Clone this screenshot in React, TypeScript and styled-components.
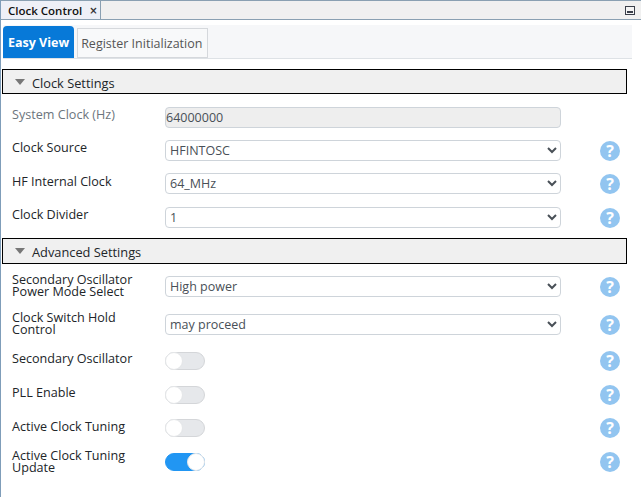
import React from "react";
import styled, { createGlobalStyle } from "styled-components";

const Global = createGlobalStyle`
  html, body { margin: 0; padding: 0; background: #fff; }
  body { font-family: "Open Sans", "Noto Sans", sans-serif; overflow: hidden; }
`;

const Page = styled.div`
  width: 641px;
  height: 497px;
  box-sizing: border-box;
  border-left: 1px solid #7f9db9;
  display: flex;
  flex-direction: column;
`;

const TabStrip = styled.div`
  height: 20px;
  flex: none;
  box-sizing: border-box;
  background: #f0f0f0;
  border-top: 1px solid #8aa0b2;
  border-bottom: 1px solid #8aa0b2;
  display: flex;
  justify-content: space-between;
  align-items: stretch;
`;

const DocTab = styled.div`
  width: 100px;
  box-sizing: border-box;
  background: #eef0f7;
  border-right: 1px solid #8aa0b2;
  padding-left: 7px;
  display: flex;
  align-items: center;
  gap: 7px;
  font-size: 11.5px;
  font-weight: 600;
  color: #111;
  white-space: nowrap;
`;

const CloseMark = styled.span`
  font-family: "DejaVu Sans", sans-serif;
  font-size: 10px;
  font-weight: 700;
  color: #333;
`;

const MinButton = styled.svg`
  width: 11px;
  height: 10px;
  margin: 5px 5px 0 0;
  flex: none;
`;

const ViewTabs = styled.div`
  margin: 5px 9px 0 2px;
  height: 33px;
  flex: none;
  background: #f6f7f9;
  border-bottom: 1px solid #dee2e6;
  display: flex;
  align-items: flex-end;
  gap: 3px;
`;

const ViewTab = styled.div<{ $active?: boolean }>`
  height: ${(p) => (p.$active ? 32 : 30)}px;
  box-sizing: border-box;
  padding: ${(p) => (p.$active ? "0 5px" : "0 5px 0 3px")};
  display: flex;
  align-items: center;
  font-size: 12.5px;
  white-space: nowrap;
  border-radius: ${(p) => (p.$active ? "4px 4px 0 0" : "0")};
  background: ${(p) => (p.$active ? "#0779d8" : "#f8f9fa")};
  color: ${(p) => (p.$active ? "#fff" : "#555")};
  font-weight: ${(p) => (p.$active ? 700 : 400)};
  border: ${(p) => (p.$active ? "none" : "1px solid #d5d8dc")};
`;

const SectionBar = styled.div<{ $mt: number; $h: number }>`
  margin: ${(p) => p.$mt}px 0 0 1px;
  width: 625px;
  height: ${(p) => p.$h}px;
  box-sizing: border-box;
  border: 1px solid #000;
  background: #f0f0f0;
  display: flex;
  align-items: center;
  padding: 2px 0 0 12px;
  gap: 7px;
  font-size: 12.8px;
  color: #212529;
`;

const Caret = styled.span`
  width: 0;
  height: 0;
  border-left: 5px solid transparent;
  border-right: 5px solid transparent;
  border-top: 6px solid #777;
  margin-top: -2px;
`;

const Row = styled.div<{ $mt: number; $h?: number }>`
  margin-top: ${(p) => p.$mt}px;
  height: ${(p) => p.$h ?? 21}px;
  flex: none;
  padding-left: 11px;
  display: flex;
  align-items: flex-start;
`;

const Label = styled.div<{ $muted?: boolean; $top: number }>`
  width: 152px;
  flex: none;
  margin-top: ${(p) => p.$top}px;
  font-size: 12.6px;
  line-height: 12px;
  color: ${(p) => (p.$muted ? "#6c757d" : "#212529")};
`;

const ControlCell = styled.div`
  width: 397px;
  box-sizing: border-box;
  padding-left: 1px;
  flex: none;
  align-self: center;
  display: flex;
  align-items: center;
`;

const TextInput = styled.input`
  width: 100%;
  height: 21px;
  box-sizing: border-box;
  border: 1px solid #ced4da;
  border-radius: 4px;
  background: #eeeeee;
  padding: 0 6px 0 0;
  font: 12.5px "Open Sans", sans-serif;
  color: #495057;
`;

const Select = styled.select`
  width: 100%;
  height: 21px;
  box-sizing: border-box;
  border: 1px solid #ced4da;
  border-radius: 4px;
  background: #fff;
  padding: 0;
  font: 12.5px "Open Sans", sans-serif;
  color: #495057;
`;

const Toggle = styled.div<{ $on?: boolean }>`
  width: 40px;
  height: 18px;
  box-sizing: border-box;
  border-radius: 9px;
  position: relative;
  background: ${(p) => (p.$on ? "#2196f3" : "#e6e8eb")};
  border: 1px solid ${(p) => (p.$on ? "#2196f3" : "#d4d6d9")};
  &::after {
    content: "";
    position: absolute;
    top: -1px;
    left: ${(p) => (p.$on ? "21px" : "-1px")};
    width: 18px;
    height: 18px;
    box-sizing: border-box;
    border-radius: 50%;
    background: #fff;
    border: 1px solid #e4e6e8;
  }
`;

const Help = styled.span`
  margin-left: 39px;
  width: 20px;
  height: 20px;
  flex: none;
  align-self: center;
  border-radius: 50%;
  background: #92c5f0;
  color: #fff;
  display: flex;
  align-items: center;
  justify-content: center;
  font-size: 16px;
  font-weight: 700;
  line-height: 20px;
`;

const HelpIcon = () => <Help>?</Help>;

const SelectField = ({ value }: { value: string }) => (
  <ControlCell>
    <Select defaultValue={value}>
      <option>{value}</option>
    </Select>
  </ControlCell>
);

const ToggleField = ({ on }: { on?: boolean }) => (
  <ControlCell>
    <Toggle $on={on} />
  </ControlCell>
);

export default function App() {
  return (
    <Page>
      <Global />
      <TabStrip>
        <DocTab>
          Clock Control <CloseMark>×</CloseMark>
        </DocTab>
        <MinButton viewBox="0 0 11 10">
          <rect x="0.5" y="0.5" width="9" height="8" fill="#f4f4f4" stroke="#3a3f4a" />
          <rect x="2" y="5" width="6" height="2" fill="#3a3f4a" />
        </MinButton>
      </TabStrip>
      <ViewTabs>
        <ViewTab $active>Easy View</ViewTab>
        <ViewTab>Register Initialization</ViewTab>
      </ViewTabs>

      <SectionBar $mt={10} $h={25}>
        <Caret />
        Clock Settings
      </SectionBar>
      <Row $mt={13}>
        <Label $muted $top={2}>System Clock (Hz)</Label>
        <ControlCell>
          <TextInput readOnly value="64000000" disabled />
        </ControlCell>
      </Row>
      <Row $mt={12}>
        <Label $top={2}>Clock Source</Label>
        <SelectField value="HFINTOSC" />
        <HelpIcon />
      </Row>
      <Row $mt={12}>
        <Label $top={3}>HF Internal Clock</Label>
        <SelectField value="64_MHz" />
        <HelpIcon />
      </Row>
      <Row $mt={13}>
        <Label $top={2}>Clock Divider</Label>
        <SelectField value="1" />
        <HelpIcon />
      </Row>

      <SectionBar $mt={10} $h={26}>
        <Caret />
        Advanced Settings
      </SectionBar>
      <Row $mt={12}>
        <Label $top={-2}>
          Secondary Oscillator
          <br />
          Power Mode Select
        </Label>
        <SelectField value="High power" />
        <HelpIcon />
      </Row>
      <Row $mt={17}>
        <Label $top={-2}>
          Clock Switch Hold
          <br />
          Control
        </Label>
        <SelectField value="may proceed" />
        <HelpIcon />
      </Row>
      <Row $mt={16} $h={20}>
        <Label $top={2}>Secondary Oscillator</Label>
        <ToggleField />
        <HelpIcon />
      </Row>
      <Row $mt={14} $h={20}>
        <Label $top={2}>PLL Enable</Label>
        <ToggleField />
        <HelpIcon />
      </Row>
      <Row $mt={13} $h={20}>
        <Label $top={3}>Active Clock Tuning</Label>
        <ToggleField />
        <HelpIcon />
      </Row>
      <Row $mt={14} $h={20}>
        <Label $top={-2}>
          Active Clock Tuning
          <br />
          Update
        </Label>
        <ToggleField on />
        <HelpIcon />
      </Row>
    </Page>
  );
}
